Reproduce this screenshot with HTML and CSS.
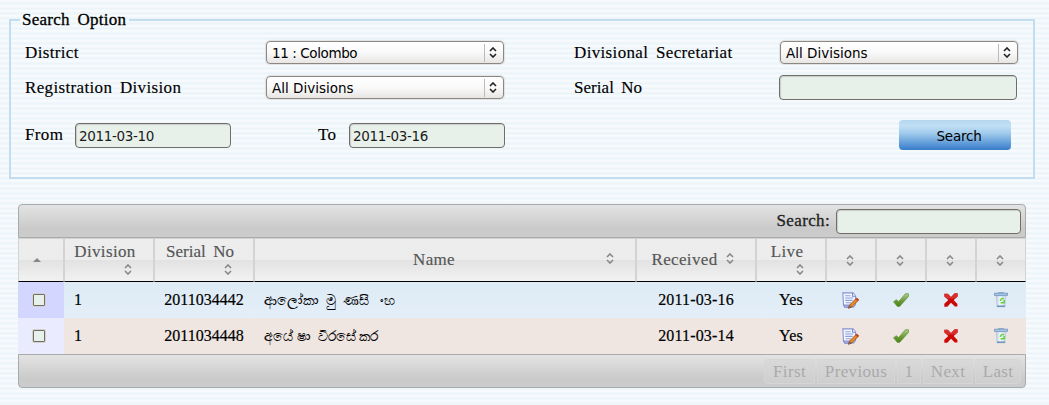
FILE: index.html
```html
<!DOCTYPE html>
<html lang="en">
<head>
<meta charset="utf-8">
<title>Search</title>
<link rel="stylesheet" href="styles.css">
</head>
<body>
<svg class="defs" width="0" height="0">
  <defs>
    <linearGradient id="tickFill" x1="0" y1="0" x2="0" y2="1"><stop offset="0" stop-color="#a9cf86"/><stop offset=".55" stop-color="#6b9b3a"/><stop offset="1" stop-color="#4a8316"/></linearGradient>
    <linearGradient id="binFill"><stop offset="0" stop-color="#b5c6dc"/><stop offset=".4" stop-color="#f5faff"/><stop offset="1" stop-color="#c5d5e8"/></linearGradient>
    <symbol id="sort" viewBox="0 0 8 11"><path d="M1 4 4 1l3 3M1 7l3 3 3-3" fill="none" stroke="currentColor" stroke-width="1.6"/></symbol>
    <symbol id="edit" viewBox="0 0 16 16">
      <path d="M.8.8h9.6l2.4 2.8v8L11 14H2.6L1.4 11.8z" fill="#f3f7ff" stroke="#8690d0"/>
      <path d="M10 1v3h3" fill="#fff" stroke="#7580c8"/>
      <path d="M3 3.5h5M3 5.7h7.5M3 7.9h7M3.5 10.1h5" stroke="#8aa0dc"/>
      <path d="M1.4 12.2h8v2.2H2.6z" fill="#a7b1e4" stroke="#7580c8" stroke-width=".7"/>
      <path d="m6 15.4 1-3L13.8 5.6l2 1.8-6.8 6.8z" fill="#e98a20" stroke="#9c4b17" stroke-width=".8"/>
      <path d="m12.6 6.9 2 1.8 1.2-1.3-2-1.8z" fill="#c9423c"/>
      <path d="m6 15.4 1-3 2 1.8z" fill="#6f665c"/>
    </symbol>
    <symbol id="tick" viewBox="0 0 16 14"><path d="M.5 8.8 3.3 6.7 5.7 8.5 12.4.7h3.1V3.4L6.6 13.4H4.4z" fill="url(#tickFill)" stroke="#64943c" stroke-width=".7"/></symbol>
    <symbol id="cross" viewBox="0 0 14 14"><path d="M.3.8h3.5L7 4 10.6.3h3.1v3.2L9.7 7l3.7 4v2.6h-2.6L7 9.8 3.3 13.8H.3v-3L4.3 7 .3 3.4z" fill="#cb0909"/><path d="M.3.8h3.5L7 4 10.6.3h3.1v3.2L11.4 5.6H2.8L.3 3.4z" fill="#dd4444" opacity=".65"/></symbol>
    <symbol id="bin" viewBox="0 0 14 16">
      <path d="M2 4h10l-.9 10.6H2.9z" fill="url(#binFill)" stroke="#b5c5d8" stroke-width=".5"/>
      <path d="M4 1.2 5 .4h4l1 .8" fill="#dce9f7" stroke="#6e90b8" stroke-width=".7"/>
      <path d="M.5 1.2h13v2.2H.5z" fill="#a9c9ea" stroke="#6287b0" stroke-width=".7"/>
      <path d="M2.9 13.4h8.2v1.7H2.9z" fill="#7597bf"/>
      <path d="M9.8 6.8C7.5 6 6.3 7.4 6.4 9M6.6 10.8h3.6V8" fill="none" stroke="#62d435" stroke-width="1.5"/>
    </symbol>
  </defs>
</svg>

<fieldset class="search-box">
  <legend>Search Option</legend>
  <div class="form-row">
    <label>District</label>
    <div class="select district">11 : Colombo<span class="arrow"><svg><use href="#sort"/></svg></span></div>
    <label>Divisional Secretariat</label>
    <div class="select">All Divisions<span class="arrow"><svg><use href="#sort"/></svg></span></div>
  </div>
  <div class="form-row">
    <label>Registration Division</label>
    <div class="select">All Divisions<span class="arrow"><svg><use href="#sort"/></svg></span></div>
    <label class="tight">Serial No</label>
    <div class="field serial"></div>
  </div>
  <div class="date-row">
    <label class="from">From</label>
    <div class="field">2011-03-10</div>
    <label class="to">To</label>
    <div class="field">2011-03-16</div>
    <button class="search-button">Search</button>
  </div>
</fieldset>

<main class="results">
  <div class="bar top"><span class="filter-label">Search:</span><div class="field filter"></div></div>
  <div class="grid head">
    <div><svg class="up" viewBox="0 0 8 4"><path d="M0 4 4 0l4 4z"/></svg></div>
    <div class="stack"><span>Division</span><svg><use href="#sort"/></svg></div>
    <div class="stack"><span class="tight">Serial No</span><svg><use href="#sort"/></svg></div>
    <div class="name"><span>Name</span><svg><use href="#sort"/></svg></div>
    <div class="received"><span>Received</span><svg><use href="#sort"/></svg></div>
    <div class="stack live"><span>Live</span><svg><use href="#sort"/></svg></div>
    <div><svg><use href="#sort"/></svg></div>
    <div><svg><use href="#sort"/></svg></div>
    <div><svg><use href="#sort"/></svg></div>
    <div><svg><use href="#sort"/></svg></div>
  </div>
  <div class="grid row odd">
    <div class="pick"><i class="check"></i></div>
    <div class="left">1</div>
    <div>2011034442</div>
    <div class="left sinhala"><span>ආලෝකා  මු  ණසි  ංහ</span></div>
    <div class="date">2011-03-16</div>
    <div class="yes">Yes</div>
    <div><svg class="edit"><use href="#edit"/></svg></div>
    <div><svg class="tick"><use href="#tick"/></svg></div>
    <div><svg class="cross"><use href="#cross"/></svg></div>
    <div><svg class="bin"><use href="#bin"/></svg></div>
  </div>
  <div class="grid row even">
    <div class="pick"><i class="check"></i></div>
    <div class="left">1</div>
    <div>2011034448</div>
    <div class="left sinhala"><span>අයේ ෂා  වීරසේ කර</span></div>
    <div class="date">2011-03-14</div>
    <div class="yes">Yes</div>
    <div><svg class="edit"><use href="#edit"/></svg></div>
    <div><svg class="tick"><use href="#tick"/></svg></div>
    <div><svg class="cross"><use href="#cross"/></svg></div>
    <div><svg class="bin"><use href="#bin"/></svg></div>
  </div>
  <div class="bar bottom">
    <span class="page first">First</span><span class="page previous">Previous</span><span class="page number">1</span><span class="page next">Next</span><span class="page last">Last</span>
  </div>
</main>
</body>
</html>
```

FILE: styles.css
```css
* { box-sizing: border-box; }
body {
  margin: 0;
  padding: 8px 0 0;
  height: 405px;
  overflow: hidden;
  color: #000;
  font: 17px/24px "Liberation Serif", serif;
  letter-spacing: .35px;
  word-spacing: 3px;
  background:
    repeating-linear-gradient(to bottom, #f8fbfe 0, #f8fbfe 1px, #f3f8fc 2px, #edf5fa 3px, #e9f4f9 4px, #f6fafd 5px);
}
.defs { position: absolute; }
svg { display: block; flex: none; }

.search-box {
  width: 1026px;
  height: 171px;
  margin: 0 0 0 9px;
  padding: 0;
  border: 2px solid #c3ddef;
}
legend { margin-left: 9px; padding: 0 0 0 2px; width: 109px; height: 24px; white-space: nowrap; letter-spacing: .27px; -webkit-text-stroke: .3px #000; }
.form-row { display: grid; grid-template-columns: 241px 308px 206px 238px; height: 35px; align-items: center; padding-left: 14px; }
.form-row label { white-space: nowrap; }
.form-row:first-of-type { margin-top: 3px; }
.tight { letter-spacing: .05px; }
label { -webkit-text-stroke: .15px #000; }
.select, .field, .search-button {
  font-family: "DejaVu Sans", sans-serif;
  font-size: 13.5px;
  letter-spacing: 0;
  word-spacing: 0;
}
.select {
  display: flex;
  align-items: center;
  justify-content: space-between;
  width: 238px;
  height: 23px;
  padding-left: 5px;
  border: 1px solid #8d8782;
  border-radius: 4px;
  box-shadow: 0 0 1px 1px #dfe2e3;
  background: linear-gradient(#fff, #f9f9f9 50%, #e8e6e4);
}
.district { letter-spacing: -.4px; }
.arrow { display: flex; width: 19px; height: 18px; align-items: center; padding-left: 4px; border-left: 1px solid #bbb; color: #222; }
.arrow svg { width: 8px; height: 11px; }
.field {
  display: flex;
  align-items: center;
  width: 156px;
  height: 25px;
  padding: 1px 0 0 3px;
  border: 1px solid #716e69;
  border-radius: 4px;
  background: #e7f1ea;
  box-shadow: inset 1px 1px 1px #c8cdc9;
  color: #1b1b1b;
  letter-spacing: -.35px;
}
.serial { width: 238px; margin-left: -1px; }
.date-row { display: flex; height: 30px; margin-top: 15px; padding-left: 14px; align-items: center; }
.from { width: 50px; }
.to { width: 31px; margin-left: 87px; }
.search-button {
  width: 112px;
  height: 30px;
  margin-left: 394px;
  padding: 2px 0 0 8px;
  border: 0;
  border-radius: 4px;
  letter-spacing: -.2px;
  color: #000;
  background: linear-gradient(#b5d8ef 0, #c0dff4 20%, #9fcaeb 45%, #5c98d8 80%, #377dca);
}

.results { width: 1008px; margin: 25px 0 0 18px; }
.bar { display: flex; height: 34px; align-items: center; justify-content: flex-end; border: 1px solid #aaa; background: linear-gradient(#e3e3e3, #cacaca 75%, #ccc); }
.top { padding-right: 4px; border-radius: 4px 4px 0 0; }
.bottom { padding-right: 4px; border-radius: 0 0 4px 4px; }
.filter { width: 185px; margin-left: 6px; }
.filter-label { color: #222; -webkit-text-stroke: .3px #222; }
.grid { display: grid; grid-template-columns: 46px 90px 100px 382px 120px 70px repeat(4, 50px); }
.head { height: 44px; color: #555; background: #d3d3d3; -webkit-text-stroke: .15px #555; }
.head > div {
  display: flex;
  align-items: center;
  justify-content: center;
  padding-right: 3px;
  border: 1px solid #d3d3d3;
  border-bottom: 1px solid #000;
  background: linear-gradient(#ededed 0, #ececec 49%, #e2e2e2 50%, #f2f2f2);
}
.head svg { width: 8px; height: 11px; color: #888; }
.head .up { width: 8px; height: 4px; margin-right: 6px; fill: #888; }
.head .stack { flex-direction: column; align-items: center; justify-content: flex-start; padding: 1px 8px 0 0; line-height: 24px; white-space: nowrap; }
.head .stack svg { align-self: flex-end; margin-right: 13px; }
.head .live svg { margin-right: 13px; }
.head .name { padding: 0 21px 4px 158px; justify-content: space-between; }
.head .name span { padding-top: 4px; }
.head .received { padding: 0 7px 0 0; gap: 8px; }
.head .received svg { margin-bottom: 4px; }
.row { height: 36px; font-size: 16px; letter-spacing: 0; -webkit-text-stroke: .2px #000; }
.row > div { display: flex; align-items: center; justify-content: center; }
.row .left { justify-content: flex-start; padding-left: 10px; }
.odd { background: linear-gradient(#ddebf4, #e4eef8); }
.even { background: #efe6e1; }
.odd .pick { background: #d3d6ff; }
.even .pick { background: #eaebff; }
.row .pick { padding-right: 4px; }
.check { width: 12px; height: 12px; border: 1px solid #706d68; border-radius: 1px; background: #e7f1ea; box-shadow: 0 0 0 1px #d5d2ce; }
.row .sinhala { white-space: pre; font-size: 14px; word-spacing: 0; padding-top: 2px; -webkit-text-stroke: .15px #000; }
.date { letter-spacing: .15px; }
.yes { letter-spacing: .2px; }
.edit { width: 17px; height: 17px; margin-right: 1px; }
.tick { width: 16px; height: 14px; }
.cross { width: 14px; height: 14px; }
.bin { width: 14px; height: 16px; }
.page { display: flex; align-items: center; justify-content: center; height: 25px; padding-top: 1px; color: #aaa; border: 1px solid #d6d6d6; background: linear-gradient(#d9d9d9, #cecece); }
.page + .page { margin-left: 2px; }
.first { width: 51px; border-radius: 4px 0 0 4px; }
.previous { width: 78px; }
.number { width: 24px; }
.next { width: 50px; }
.last { width: 46px; border-radius: 0 4px 4px 0; }
```
